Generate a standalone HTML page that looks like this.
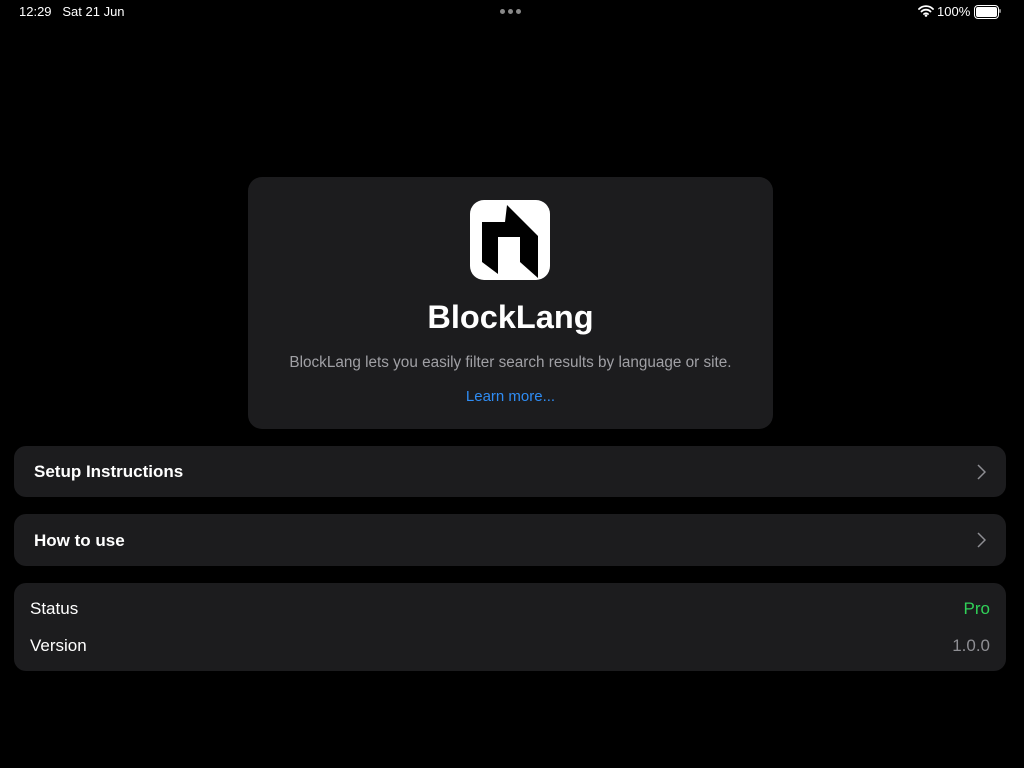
<!DOCTYPE html>
<html><head><meta charset="utf-8"><style>
body{margin:0;width:1024px;height:768px;background:#000;font-family:"Liberation Sans",sans-serif;color:#fff;position:relative;overflow:hidden}
.sb{position:absolute;top:4px;font-size:13px;font-weight:400}
.card{position:absolute;left:248px;top:177px;width:525px;height:252px;background:#1c1c1e;border-radius:14px;text-align:center}
.row{position:absolute;left:14px;width:992px;background:#1c1c1e;border-radius:12px}
.lbl{position:absolute;font-size:17px;font-weight:600}
.chev{position:absolute;right:20px;top:18px}
</style></head><body>
<div class="sb" style="left:19px">12:29&nbsp;&nbsp;&nbsp;Sat 21 Jun</div>
<div style="position:absolute;left:500px;top:9px;display:flex;gap:3px"><i style="width:5px;height:5px;border-radius:50%;background:#888"></i><i style="width:5px;height:5px;border-radius:50%;background:#888"></i><i style="width:5px;height:5px;border-radius:50%;background:#888"></i></div>
<svg style="position:absolute;left:918px;top:4px" width="16" height="13" viewBox="0 0 16 13"><path d="M1 5a10 10 0 0 1 14 0M3.5 7.5a6.5 6.5 0 0 1 9 0M6 10a3 3 0 0 1 4 0" stroke="#fff" stroke-width="1.8" fill="none" stroke-linecap="round"/><circle cx="8" cy="11.5" r="1.3" fill="#fff"/></svg>
<div class="sb" style="left:937px">100%</div>
<div style="position:absolute;left:974px;top:5px;width:21px;height:10px;border:1.5px solid #fff;border-radius:4px;padding:1px;box-sizing:content-box"><div style="width:100%;height:100%;background:#fff;border-radius:2px"></div></div>
<div style="position:absolute;left:999px;top:9px;width:2px;height:4px;background:#888;border-radius:1px"></div>
<div class="card">
<svg style="position:absolute;left:222px;top:23px" width="80" height="80" viewBox="0 0 80 80"><rect width="80" height="80" rx="14" fill="#fff"/><polygon points="12,22 35,22 37,5 68,36 68,78 50,62 50,37 28,37 28,74 12,62" fill="#000"/></svg>
<div style="position:absolute;top:122px;width:100%;font-size:32.5px;font-weight:700">BlockLang</div>
<div style="position:absolute;top:177px;width:100%;font-size:15.3px;color:#a0a0a5">BlockLang lets you easily filter search results by language or site.</div>
<div style="position:absolute;top:211px;width:100%;font-size:15px;color:#2f8cf3">Learn more...</div>
</div>
<div class="row" style="top:446px;height:51px"><div class="lbl" style="left:20px;top:16px">Setup Instructions</div><svg class="chev" width="9" height="16" viewBox="0 0 9 16"><path d="M1 1l7 7-7 7" stroke="#8e8e93" stroke-width="1.5" fill="none"/></svg></div>
<div class="row" style="top:514px;height:52px"><div class="lbl" style="left:20px;top:17px">How to use</div><svg class="chev" width="9" height="16" viewBox="0 0 9 16"><path d="M1 1l7 7-7 7" stroke="#8e8e93" stroke-width="1.5" fill="none"/></svg></div>
<div class="row" style="top:583px;height:88px">
<div class="lbl" style="left:16px;top:16px;font-weight:500">Status</div>
<div class="lbl" style="right:16px;top:16px;color:#30d158;font-weight:500">Pro</div>
<div class="lbl" style="left:16px;top:53px;font-weight:500">Version</div>
<div class="lbl" style="right:16px;top:53px;color:#8e8e93;font-weight:500">1.0.0</div>
</div>
</body></html>
